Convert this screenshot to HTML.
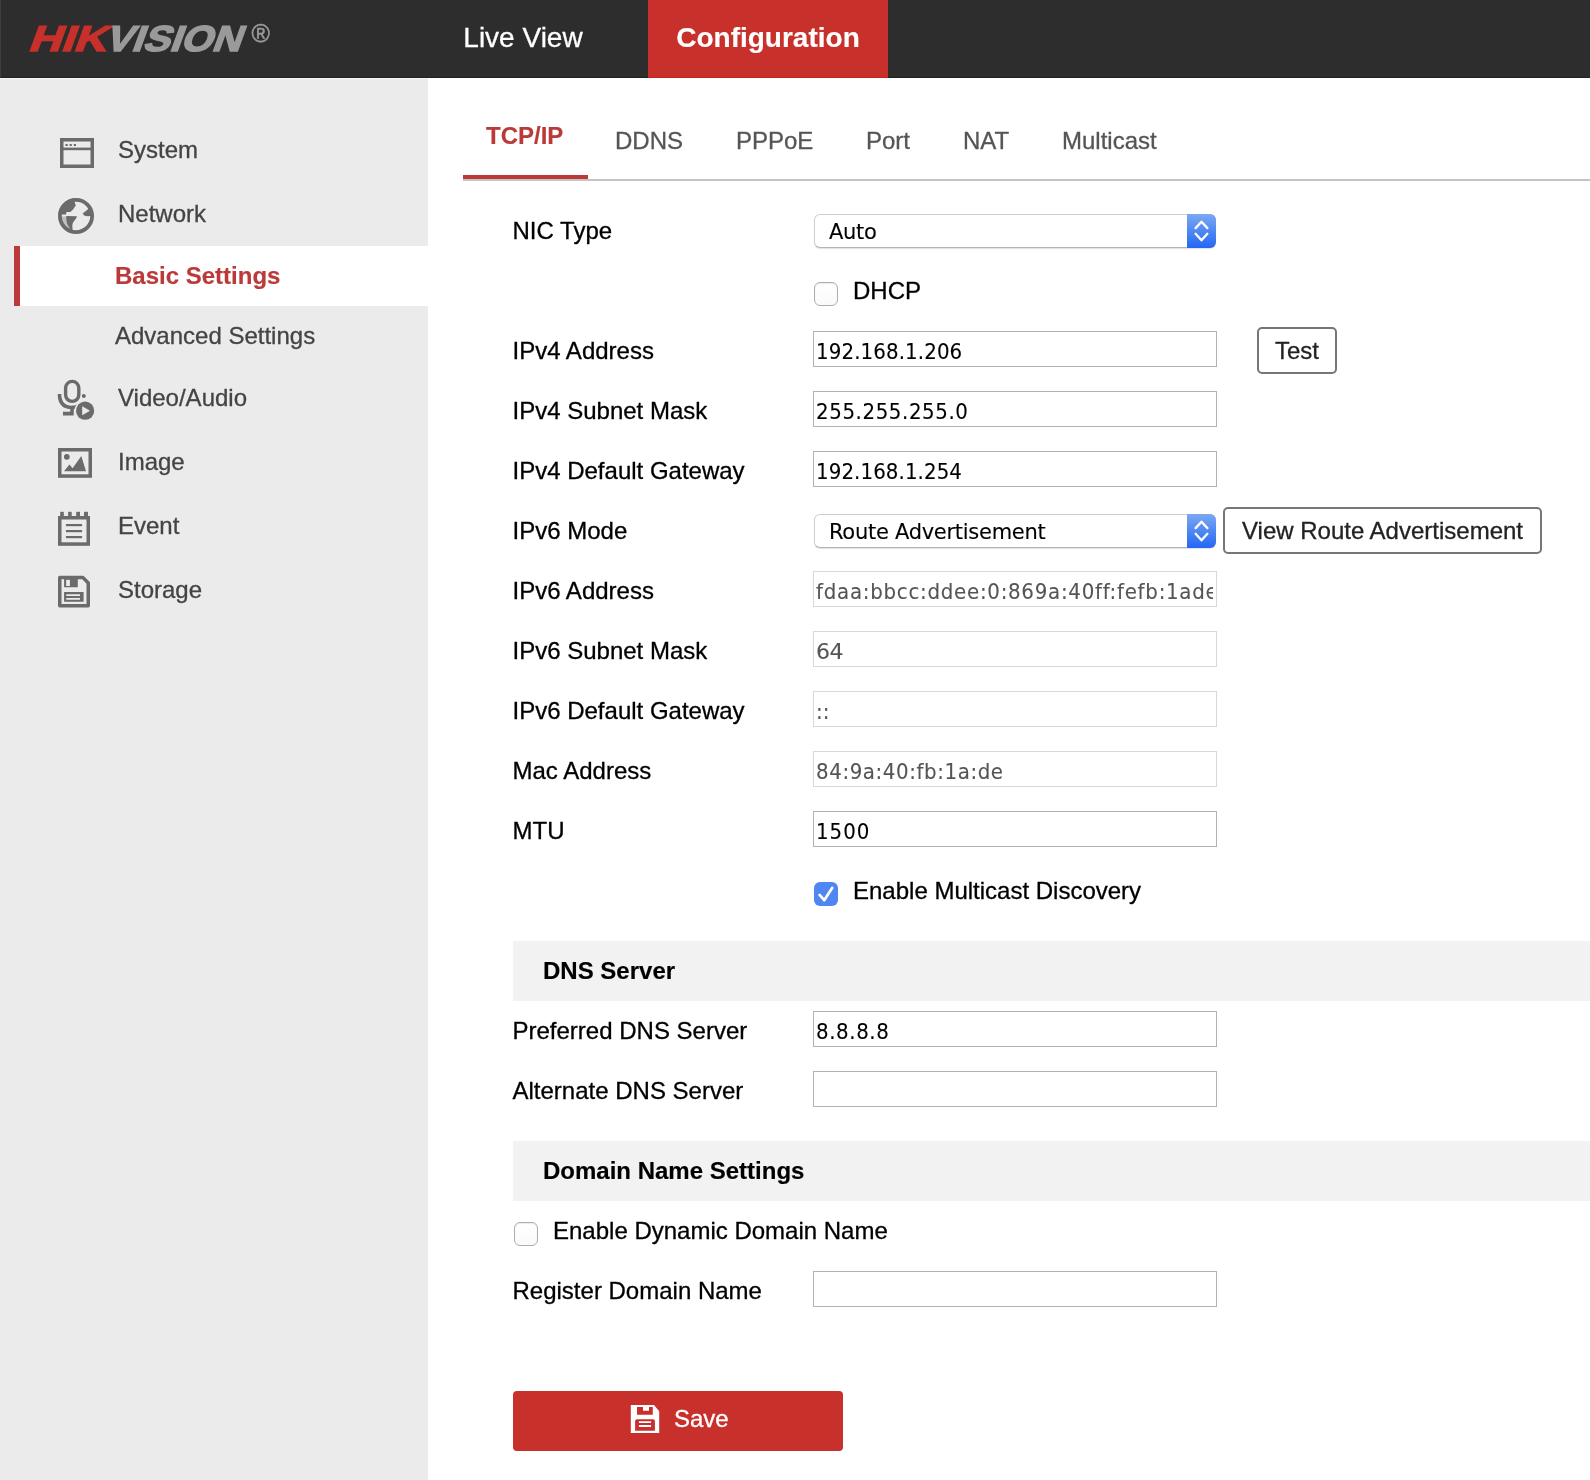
<!DOCTYPE html>
<html lang="en">
<head>
<meta charset="utf-8">
<title>Configuration</title>
<style>
*{box-sizing:border-box;margin:0;padding:0}
html,body{width:1590px;height:1480px;overflow:hidden;background:#fff}
body{will-change:transform;-webkit-text-stroke:0.3px currentColor}
body{position:relative;font-family:"Liberation Sans",Arial,Helvetica,sans-serif;font-size:24px;color:#000}
.abs{position:absolute}
/* header */
#hdr{position:absolute;left:0;top:0;width:1590px;height:78px;background:#2d2d2d;border-bottom:1px solid #202020;border-left:1px solid #3e3e3e}
#logo{position:absolute;left:-1px;top:0}
.nav{position:absolute;top:0;height:78px;line-height:75px;font-size:28px;color:#fff;text-align:center;white-space:nowrap}
#nav1{left:402px;width:240px}
#nav2{left:647px;width:240px;background:#c8302b;font-weight:bold;height:78px;border-bottom:1px solid #c6231f}
#nav2,#sel span,#tab0,.sec{-webkit-text-stroke:0.15px currentColor}
.inp,.selbox{-webkit-text-stroke:0.1px currentColor}
/* sidebar */
#side{position:absolute;left:0;top:78px;width:428px;height:1402px;background:#ebebeb;border-top:1px solid #f8f8f8}
.mi{position:absolute;left:118px;height:64px;line-height:64px;font-size:24px;color:#444;white-space:nowrap}
.sub{position:absolute;left:115px;height:60px;line-height:60px;font-size:24px;color:#444;white-space:nowrap}
#sel{position:absolute;left:14px;top:246px;width:414px;height:60px;background:#fff;border-left:6px solid #bb3939}
#sel span{position:absolute;left:95px;top:0;line-height:60px;font-weight:bold;color:#bb3939;white-space:nowrap}
.ico{position:absolute;left:50px}
/* tabs */
.tab{position:absolute;top:126px;line-height:30px;font-size:24px;color:#555;white-space:nowrap}
#tab0{top:121px;color:#bb3939;font-weight:bold}
#tabline{position:absolute;left:463px;top:179px;width:1127px;height:2px;background:#c4c4c4}
#tabul{position:absolute;left:463px;top:175px;width:125px;height:4px;background:#bb3939}
/* form */
.lbl{position:absolute;left:512.5px;height:60px;line-height:60px;white-space:nowrap}
.inp{position:absolute;left:813px;width:404px;height:36px;border:1px solid #b2b2b2;background:#fff;font-family:"DejaVu Sans Condensed","DejaVu Sans",sans-serif;font-size:22px;line-height:34px;padding:3px 0 0 2px;white-space:nowrap;overflow:hidden;color:#000}
.inp.dis{border-color:#d8d8d8;color:#555}
.selbox{position:absolute;left:814px;width:402px;height:34px;border:1px solid #cfcfcf;border-bottom-color:#b4b4b4;border-radius:6px;background:#fff;box-shadow:0 1px 1px rgba(0,0,0,.12);font-family:"DejaVu Sans",sans-serif;font-size:21px;letter-spacing:-0.28px;line-height:32px;padding:1px 0 0 14px;white-space:nowrap}
.selbox i{position:absolute;right:-1px;top:-1px;width:29px;height:34px;border-radius:0 6px 6px 0;background:linear-gradient(#7ba8f4,#4f88f3 50%,#2566f5)}
.selbox svg{position:absolute;left:0;top:0}
.cb{position:absolute;width:24px;height:24px;border-radius:6px;border:1px solid #adadad;background:linear-gradient(#fff,#fafafa);box-shadow:inset 0 1px 1px rgba(0,0,0,.08)}
.cb.on{border:0;background:#4f86f1;box-shadow:none}
.btn{position:absolute;height:47px;border:2px solid #767676;border-radius:5px;background:#fff;line-height:43px;font-size:24px;color:#222;text-align:center;white-space:nowrap}
.sec{position:absolute;left:513px;width:1077px;height:60px;background:#f2f2f2;line-height:60px;font-weight:bold;padding-left:30px;white-space:nowrap}
#save{position:absolute;left:513px;top:1391px;width:330px;height:60px;border-radius:4px;background:#c8302b;color:#fff}
#save span{position:absolute;left:161px;top:0;line-height:56px;font-size:24px}
#save svg{position:absolute;left:117px;top:14px}
</style>
</head>
<body>
<div id="hdr">
<svg id="logo" width="300" height="78" viewBox="0 0 300 78">
<g transform="translate(0,51) skewX(-20)" font-family="Liberation Sans, Arial, sans-serif" font-weight="bold" font-size="36" stroke-linejoin="miter">
<text x="27.6" y="0" fill="#c8302b" stroke="#c8302b" stroke-width="1.5" textLength="78" lengthAdjust="spacingAndGlyphs">HIK</text>
<text x="104" y="0" fill="#9a9a9a" stroke="#9a9a9a" stroke-width="1.5" textLength="136" lengthAdjust="spacingAndGlyphs">VISION</text>
</g>
<text x="251.6" y="42.2" fill="#9a9a9a" stroke="#9a9a9a" stroke-width="0.5" font-family="Liberation Sans, Arial, sans-serif" font-size="25">®</text>
</svg>
<div class="nav" id="nav1">Live View</div>
<div class="nav" id="nav2">Configuration</div>
</div>

<div id="side">
</div>
<div class="mi" style="top:118px">System</div>
<div class="mi" style="top:182px">Network</div>
<div id="sel"><span>Basic Settings</span></div>
<div class="sub" style="top:306px">Advanced Settings</div>
<div class="mi" style="top:366px">Video/Audio</div>
<div class="mi" style="top:430px">Image</div>
<div class="mi" style="top:494px">Event</div>
<div class="mi" style="top:558px">Storage</div>

<svg class="abs" style="left:50px;top:128px" width="56" height="50" viewBox="50 128 56 50"><rect x="61.75" y="139.75" width="30.5" height="26.5" fill="none" stroke="#6b6b6b" stroke-width="3.5"/><rect x="60" y="147.6" width="34" height="2.6" fill="#6b6b6b"/><rect x="65.5" y="144" width="2.2" height="2" fill="#6b6b6b"/><rect x="69.6" y="144" width="2.2" height="2" fill="#6b6b6b"/><rect x="73.8" y="144" width="2.2" height="2" fill="#6b6b6b"/></svg>
<svg class="abs" style="left:50px;top:190px" width="56" height="52" viewBox="50 190 56 52"><defs><clipPath id="gc"><circle cx="76" cy="216" r="17.8"/></clipPath></defs><circle cx="76" cy="216" r="16.1" fill="none" stroke="#6b6b6b" stroke-width="3.8"/><g clip-path="url(#gc)" fill="#6b6b6b"><path d="M73.3 196 L74.3 201 L75.8 205.5 L73 209.6 L70.3 212.1 L66.4 211.9 L66.1 214.4 L57 214.4 L57 196 Z"/><path d="M66.3 216 L77 216.3 L76.4 218 L73 222.6 L72.3 225 L72.7 233 L70.7 233 L70 228.6 L67.3 224.6 L66.2 220 Z"/><path opacity=".35" d="M60 216.6 L66.3 216.6 L66.2 220 L67.3 224.6 L70 228.6 L70.7 233 L60 233 Z"/><path d="M92 205.8 L88.3 208.9 L82.6 213.6 L84.5 215.8 L88 216.3 L94 215.6 Z"/></g></svg>
<svg class="abs" style="left:50px;top:372px" width="56" height="52" viewBox="50 372 56 52"><rect x="65.6" y="381.4" width="13.2" height="20" rx="6.6" fill="none" stroke="#6b6b6b" stroke-width="3.4"/><path d="M59.5 394 C59.5 403 64 407.5 72 407.5 L72 413.6 M63 413.6 L73.7 413.6" fill="none" stroke="#6b6b6b" stroke-width="3.6"/><path d="M72 407.5 C76 407.5 79 406 81 403" fill="none" stroke="#6b6b6b" stroke-width="3.6"/><circle cx="83.8" cy="395.9" r="2" fill="#6b6b6b"/><circle cx="85.1" cy="410.7" r="10.6" fill="#ebebeb"/><circle cx="85.1" cy="410.7" r="9.1" fill="#6b6b6b"/><path d="M82.2 406.2 L90 410.7 L82.2 415.2 Z" fill="#ebebeb"/></svg>
<svg class="abs" style="left:50px;top:440px" width="56" height="46" viewBox="50 440 56 46"><rect x="59.75" y="449.75" width="30.5" height="26.3" fill="none" stroke="#6b6b6b" stroke-width="3.5"/><circle cx="66.8" cy="456.8" r="2.9" fill="#6b6b6b"/><path d="M64 471.2 L69.4 464.6 L72.6 468.2 L81.3 456 L86 471.2 Z" fill="#6b6b6b"/></svg>
<svg class="abs" style="left:50px;top:504px" width="56" height="50" viewBox="50 504 56 50"><rect x="59.75" y="517.75" width="28.5" height="26.3" fill="none" stroke="#6b6b6b" stroke-width="3.5"/><rect x="60.2" y="511.8" width="3.6" height="5" fill="#6b6b6b"/><rect x="68.1" y="511.8" width="3.6" height="5" fill="#6b6b6b"/><rect x="76.2" y="511.8" width="3.8" height="5" fill="#6b6b6b"/><rect x="84" y="511.8" width="4" height="5" fill="#6b6b6b"/><rect x="65.9" y="524" width="16.2" height="2.2" fill="#6b6b6b"/><rect x="65.9" y="530" width="16.2" height="2.2" fill="#6b6b6b"/><rect x="65.9" y="536" width="16.2" height="2.2" fill="#6b6b6b"/></svg>
<svg class="abs" style="left:50px;top:568px" width="56" height="48" viewBox="50 568 56 48"><path d="M59.75 577.6 L83 577.6 L88.25 583 L88.25 605.8 L59.75 605.8 Z" fill="none" stroke="#6b6b6b" stroke-width="3.5" stroke-linejoin="round"/><path d="M64.1 577 L77.8 577 L77.8 587.2 L64.1 587.2 Z M66.2 579.7 L66.2 585.9 L69.9 585.9 L69.9 579.7 Z" fill="#6b6b6b" fill-rule="evenodd"/><path d="M64.1 592 H83.6 V601.7 H64.1 Z M66.3 594.3 V596 H80 V594.3 Z M66.3 598 V599.7 H80 V598 Z" fill="#6b6b6b" fill-rule="evenodd"/></svg>


<div class="tab" id="tab0" style="left:486px">TCP/IP</div>
<div class="tab" style="left:615px">DDNS</div>
<div class="tab" style="left:736px">PPPoE</div>
<div class="tab" style="left:866px">Port</div>
<div class="tab" style="left:963px">NAT</div>
<div class="tab" style="left:1062px">Multicast</div>
<div id="tabline"></div>
<div id="tabul"></div>

<div class="lbl" style="top:201px">NIC Type</div>
<div class="selbox" style="top:214px">Auto<i><svg width="29" height="34" viewBox="0 0 29 34"><path d="M8.6 14.1 L14.5 7.8 L20.4 14.1 M8.6 19.8 L14.5 26.3 L20.4 19.8" fill="none" stroke="#fff" stroke-width="2.3" stroke-linecap="round" stroke-linejoin="round"/></svg></i></div>
<div class="cb" style="left:814px;top:282px"></div><div class="lbl" style="left:853px;top:261px">DHCP</div>
<div class="lbl" style="top:321px">IPv4 Address</div>
<div class="inp" style="top:331px;letter-spacing:0.12px">192.168.1.206</div>
<div class="btn" style="left:1257px;top:327px;width:80px">Test</div>
<div class="lbl" style="top:381px">IPv4 Subnet Mask</div>
<div class="inp" style="top:391px;letter-spacing:0.6px">255.255.255.0</div>
<div class="lbl" style="top:441px">IPv4 Default Gateway</div>
<div class="inp" style="top:451px;letter-spacing:0.1px">192.168.1.254</div>
<div class="lbl" style="top:501px">IPv6 Mode</div>
<div class="selbox" style="top:514px">Route Advertisement<i><svg width="29" height="34" viewBox="0 0 29 34"><path d="M8.6 14.1 L14.5 7.8 L20.4 14.1 M8.6 19.8 L14.5 26.3 L20.4 19.8" fill="none" stroke="#fff" stroke-width="2.3" stroke-linecap="round" stroke-linejoin="round"/></svg></i></div>
<div class="btn" style="left:1223px;top:507px;width:319px">View Route Advertisement</div>
<div class="lbl" style="top:561px">IPv6 Address</div>
<div class="inp dis" style="top:571px;letter-spacing:0.74px"><span style="display:block;overflow:hidden;width:397px">fdaa:bbcc:ddee:0:869a:40ff:fefb:1ade</span></div>
<div class="lbl" style="top:621px">IPv6 Subnet Mask</div>
<div class="inp dis" style="top:631px;letter-spacing:-0.4px;font-family:'DejaVu Sans',sans-serif">64</div>
<div class="lbl" style="top:681px">IPv6 Default Gateway</div>
<div class="inp dis" style="top:691px">::</div>
<div class="lbl" style="top:741px">Mac Address</div>
<div class="inp dis" style="top:751px;letter-spacing:0.6px">84:9a:40:fb:1a:de</div>
<div class="lbl" style="top:801px">MTU</div>
<div class="inp" style="top:811px;letter-spacing:1px">1500</div>
<div class="cb on" style="left:814px;top:882px"><svg width="24" height="24" viewBox="0 0 24 24"><path d="M5.6 12.9 L10.2 18.2 L18.2 5.9" fill="none" stroke="#fff" stroke-width="2.7" stroke-linecap="round" stroke-linejoin="round"/></svg></div><div class="lbl" style="left:853px;top:861px">Enable Multicast Discovery</div>
<div class="sec" style="top:941px">DNS Server</div>
<div class="lbl" style="top:1001px">Preferred DNS Server</div>
<div class="inp" style="top:1011px;letter-spacing:0.6px">8.8.8.8</div>
<div class="lbl" style="top:1061px">Alternate DNS Server</div>
<div class="inp" style="top:1071px"></div>
<div class="sec" style="top:1141px">Domain Name Settings</div>
<div class="cb" style="left:514px;top:1222px"></div><div class="lbl" style="left:553px;top:1201px">Enable Dynamic Domain Name</div>
<div class="lbl" style="top:1261px">Register Domain Name</div>
<div class="inp" style="top:1271px"></div>
<div id="save"><svg width="30" height="30" viewBox="0 0 30 30"><path d="M0.8 0 H24 L29.2 6.2 V28.1 H0.8 Z M7 2.1 H13 V5.8 H19 V2.1 H22.8 V9.8 H7 Z M7.1 14.2 H22.9 Q24.9 14.2 24.9 16.2 V25.7 H5.1 V16.2 Q5.1 14.2 7.1 14.2 Z M8.9 16.2 H21.1 V18.1 H8.9 Z M8.9 20.1 H21.1 V22.1 H8.9 Z" fill="#fff" fill-rule="evenodd"/></svg><span>Save</span></div>

</body>
</html>
